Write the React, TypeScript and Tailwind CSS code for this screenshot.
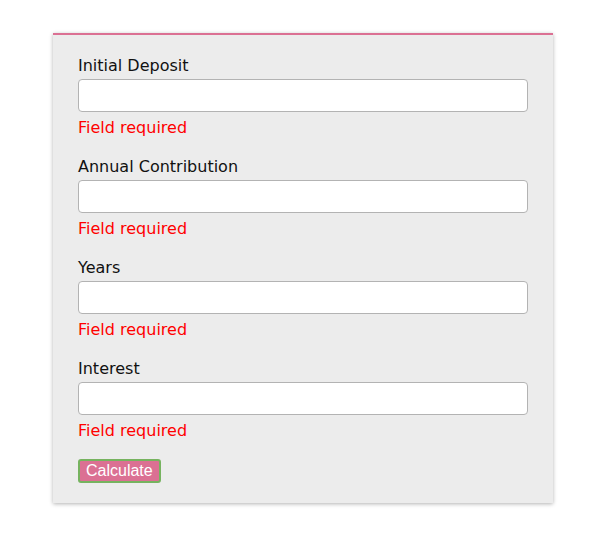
const fields = ['Initial Deposit', 'Annual Contribution', 'Years', 'Interest'];

export default function App() {
  return (
    <div className="bg-white w-[598px] h-[559px] pt-[33px] pl-[53px]">
      <div className="w-[500px] h-[470px] bg-[#ececec] border-t-2 border-[#db7093] shadow-[0_1px_4px_rgba(0,0,0,0.3)] px-[25px] pt-[19px] font-['DejaVu_Sans',Verdana,sans-serif] text-[16px]">
        {fields.map((f) => (
          <div key={f} className="mb-[15px]">
            <div className="text-[#111] leading-[24px]">{f}</div>
            <input className="block mt-[1px] w-[450px] h-[33px] bg-white border border-[#b3b3b3] rounded-[4px]" />
            <div className="mt-[4px] text-[#ff0000] leading-[24px]">Field required</div>
          </div>
        ))}
        <button className="mt-[1px] bg-[#db7093] text-white border-2 border-[#76b35f] rounded-[3px] px-[6px] h-[24px] text-[16px] leading-[20px] font-['Liberation_Sans',Arial,sans-serif]">
          Calculate
        </button>
      </div>
    </div>
  );
}
